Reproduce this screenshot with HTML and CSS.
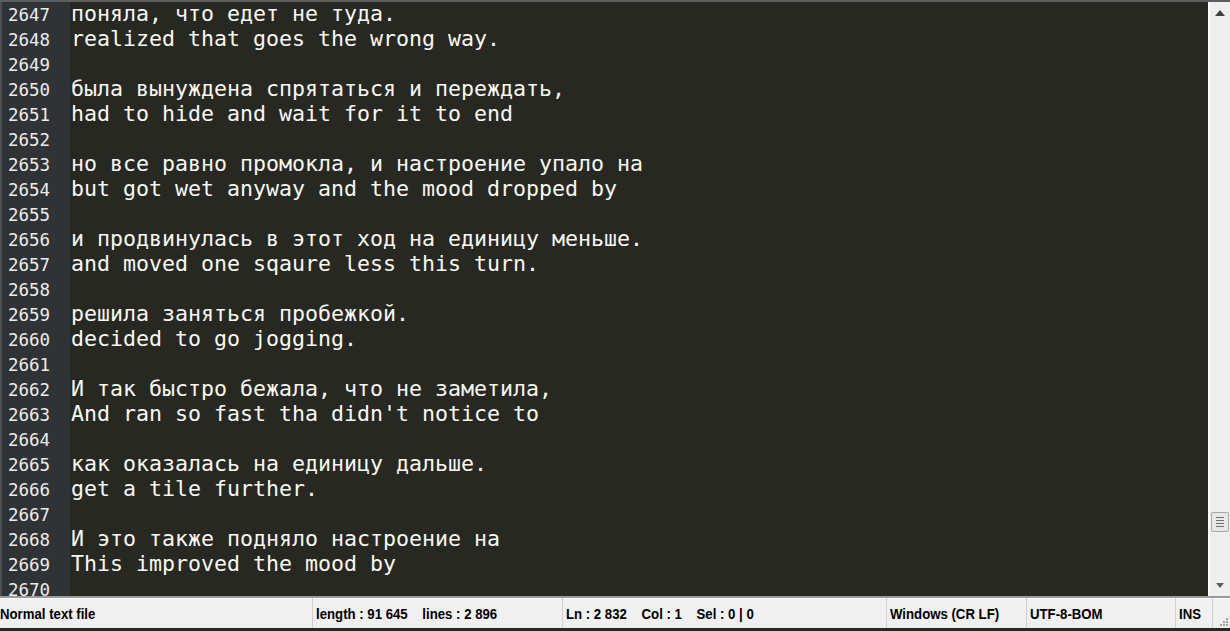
FILE: index.html
```html
<!DOCTYPE html>
<html>
<head>
<meta charset="utf-8">
<link rel="stylesheet" href="styles.css">
</head>
<body>
<div class="app">
  <div class="editor">
    <div class="gutter">
      <div>2647</div><div>2648</div><div>2649</div><div>2650</div><div>2651</div><div>2652</div>
      <div>2653</div><div>2654</div><div>2655</div><div>2656</div><div>2657</div><div>2658</div>
      <div>2659</div><div>2660</div><div>2661</div><div>2662</div><div>2663</div><div>2664</div>
      <div>2665</div><div>2666</div><div>2667</div><div>2668</div><div>2669</div><div>2670</div>
    </div>
    <div class="text">
      <div>поняла, что едет не туда.</div>
      <div>realized that goes the wrong way.</div>
      <div>&nbsp;</div>
      <div>была вынуждена спрятаться и переждать,</div>
      <div>had to hide and wait for it to end</div>
      <div>&nbsp;</div>
      <div>но все равно промокла, и настроение упало на</div>
      <div>but got wet anyway and the mood dropped by</div>
      <div>&nbsp;</div>
      <div>и продвинулась в этот ход на единицу меньше.</div>
      <div>and moved one sqaure less this turn.</div>
      <div>&nbsp;</div>
      <div>решила заняться пробежкой.</div>
      <div>decided to go jogging.</div>
      <div>&nbsp;</div>
      <div>И так быстро бежала, что не заметила,</div>
      <div>And ran so fast tha didn't notice to</div>
      <div>&nbsp;</div>
      <div>как оказалась на единицу дальше.</div>
      <div>get a tile further.</div>
      <div>&nbsp;</div>
      <div>И это также подняло настроение на</div>
      <div>This improved the mood by</div>
      <div>&nbsp;</div>
    </div>
    <div class="scrollbar">
      <svg class="arrow" width="10" height="6" viewBox="0 0 10 6"><path d="M5 0 L10 6 L0 6 Z" fill="#404040"/></svg>
      <div class="track">
        <div class="thumb">
          <span></span><span></span><span></span><span></span>
        </div>
      </div>
      <svg class="arrow" width="8" height="5" viewBox="0 0 8 5"><path d="M0 0 L8 0 L4 5 Z" fill="#606060"/></svg>
    </div>
  </div>
  <div class="status">
    <div class="cell c1"><span>Normal text file</span></div>
    <div class="cell c2"><span>length : 91 645&nbsp;&nbsp;&nbsp;&nbsp;lines : 2 896</span></div>
    <div class="cell c3"><span>Ln : 2 832&nbsp;&nbsp;&nbsp;&nbsp;Col : 1&nbsp;&nbsp;&nbsp;&nbsp;Sel : 0 | 0</span></div>
    <div class="cell c4"><span>Windows (CR LF)</span></div>
    <div class="cell c5"><span>UTF-8-BOM</span></div>
    <div class="cell c6"><span>INS</span></div>
    <div class="cell c7">
      <svg width="12" height="12" viewBox="0 0 12 12">
        <g fill="#a0a0a0">
          <rect x="9" y="3" width="2" height="2"/>
          <rect x="6" y="6" width="2" height="2"/><rect x="9" y="6" width="2" height="2"/>
          <rect x="3" y="9" width="2" height="2"/><rect x="6" y="9" width="2" height="2"/><rect x="9" y="9" width="2" height="2"/>
        </g>
      </svg>
    </div>
  </div>
</div>
</body>
</html>
```
FILE: styles.css
```css
html, body {
  margin: 0;
  padding: 0;
  width: 1230px;
  height: 631px;
  overflow: hidden;
  background: #f0f0f0;
}

.app {
  display: flex;
  flex-direction: column;
  width: 1230px;
  height: 631px;
}

.editor {
  display: flex;
  height: 594px;
  border-top: 2px solid #5e5e5e;
  overflow: hidden;
  background: #272822;
}

.gutter {
  flex: none;
  width: 62px;
  background: #2f3336;
  border-left: 2px solid #4a4f53;
  color: #ececec;
  font-family: "DejaVu Sans Mono", monospace;
  font-size: 17.5px;
  line-height: 25px;
  padding-left: 6px;
  padding-top: 1px;
}

.text {
  flex: 1;
  color: #f8f8f2;
  font-family: "DejaVu Sans Mono", monospace;
  font-size: 21.6px;
  line-height: 25px;
  padding-left: 1px;
  margin-top: -1px;
}

.text div {
  white-space: pre;
}

.scrollbar {
  width: 20px;
  flex: none;
  background: #efefef;
  border-left: 2px solid #ffffff;
  display: flex;
  flex-direction: column;
  align-items: center;
}

.arrow {
  flex: none;
  margin: 8px 0;
}

.track {
  flex: 1;
  width: 100%;
  position: relative;
}

.thumb {
  position: absolute;
  left: 1px;
  top: 488px;
  width: 16px;
  height: 18px;
  background: #e8e8e8;
  border: 1px solid #a8a8a8;
  border-radius: 2px;
  display: flex;
  flex-direction: column;
  align-items: center;
  justify-content: center;
  gap: 2px;
}

.thumb span {
  display: block;
  width: 8px;
  height: 1px;
  background: #707070;
}

.status {
  flex: 1;
  display: grid;
  grid-template-columns: 312px 250px 324px 140px 149px 37px 1fr;
  border-top: 2px solid #9a9a9a;
  border-bottom: 3px solid #1f2d22;
  background: #f0f0f0;
  font-family: "Liberation Sans", Arial, sans-serif;
  font-weight: bold;
  font-size: 15px;
  color: #000;
  box-shadow: inset 0 1px 0 #ffffff;
}

.cell {
  display: flex;
  align-items: center;
  padding-left: 3px;
  border-left: 1px solid #d0d0d0;
  white-space: pre;
  overflow: hidden;
}

.cell span {
  display: inline-block;
  transform: scaleX(0.88);
  transform-origin: left center;
}

.c1 {
  border-left: none;
  padding-left: 0;
}

.c7 {
  justify-content: flex-end;
  align-items: flex-end;
  padding: 0 1px 1px 0;
}
```
